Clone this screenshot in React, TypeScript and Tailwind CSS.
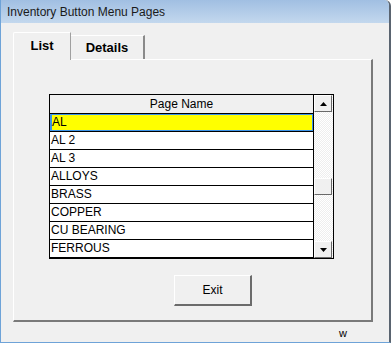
const pages = ['AL', 'AL 2', 'AL 3', 'ALLOYS', 'BRASS', 'COPPER', 'CU BEARING', 'FERROUS']

function ScrollButton({ dir }: { dir: 'up' | 'down' }) {
  return (
    <div className="h-[17px] w-[18px] bg-[#f0f0f0] border-t border-l border-t-white border-l-white border-r border-b border-r-[#696969] border-b-[#696969] flex items-center justify-center">
      <svg width="7" height="4" viewBox="0 0 7 4">
        {dir === 'up' ? <polygon points="3.5,0 7,4 0,4" fill="#000" /> : <polygon points="0,0 7,0 3.5,4" fill="#000" />}
      </svg>
    </div>
  )
}

export default function App() {
  return (
    <div
      className="w-[391px] h-[343px] bg-[#f0f0f0] flex flex-col border-l border-b border-[#6ea3d8] border-r-2 border-r-[#5a6470] rounded-tr-[6px] overflow-hidden text-black"
      style={{ fontFamily: '"Liberation Sans", Arial, sans-serif' }}
    >
      <div className="h-[23px] shrink-0 bg-gradient-to-b from-[#a1bfe2] to-[#c3d8ee] pl-[6px] flex items-center text-[12px] text-[#1a1a1a]">
        Inventory Button Menu Pages
      </div>

      <div className="pl-[12px] pt-[9px] flex flex-col">
        <div className="flex items-end h-[27px] relative z-10">
          <div className="w-[58px] h-[28px] -mb-px bg-[#f0f0f0] border-l border-t border-l-white border-t-white border-r border-r-[#a0a0a0] rounded-tl-[2px] flex items-center justify-center text-[13px] font-bold pb-[2px]">
            List
          </div>
          <div className="w-[74px] h-[24px] bg-[#f0f0f0] border-t border-t-white border-r-2 border-r-[#8a8a8a] flex items-center justify-center text-[13px] font-bold pt-[1px]">
            Details
          </div>
        </div>

        <div className="w-[360px] h-[263px] border-t border-l border-t-white border-l-white border-r-2 border-b-2 border-r-[#7a7a7a] border-b-[#7a7a7a] flex flex-col">
          <div className="ml-[35px] mt-[34px] w-[285px] h-[165px] border border-black bg-white flex">
            <div className="w-[264px] border-r border-black flex flex-col">
              <div className="h-[19px] bg-[#f0f0f0] border-b border-black flex items-center justify-center text-[12px]">
                Page Name
              </div>
              {pages.map((p, i) => (
                <div key={p} className="h-[18px] border-b border-black text-[12px] leading-[17px]">
                  {i === 0 ? (
                    <div className="h-[17px] bg-[#ffff00] border border-l-2 border-[#3c94e8] leading-[15px]">{p}</div>
                  ) : (
                    <div className="pl-[1px]">{p}</div>
                  )}
                </div>
              ))}
            </div>
            <div className="w-[19px] flex flex-col bg-[repeating-conic-gradient(#ffffff_0_25%,#eeeeee_0_50%)] bg-[length:2px_2px]">
              <ScrollButton dir="up" />
              <div className="h-[66px]" />
              <div className="h-[17px] w-[18px] bg-[#f0f0f0] border-t border-l border-t-white border-l-white border-r border-b border-r-[#696969] border-b-[#696969]" />
              <div className="flex-1" />
              <ScrollButton dir="down" />
            </div>
          </div>

          <button className="ml-[160px] mt-[16px] w-[78px] h-[31px] bg-[#f0f0f0] border-t border-l border-t-white border-l-white border-r-2 border-b-2 border-r-[#6b6b6b] border-b-[#6b6b6b] text-[12px] flex items-center justify-center">
            Exit
          </button>
        </div>

        <div className="h-[20px] pl-[326px] text-[11px] leading-[20px] pt-[1px]">w</div>
      </div>
    </div>
  )
}
